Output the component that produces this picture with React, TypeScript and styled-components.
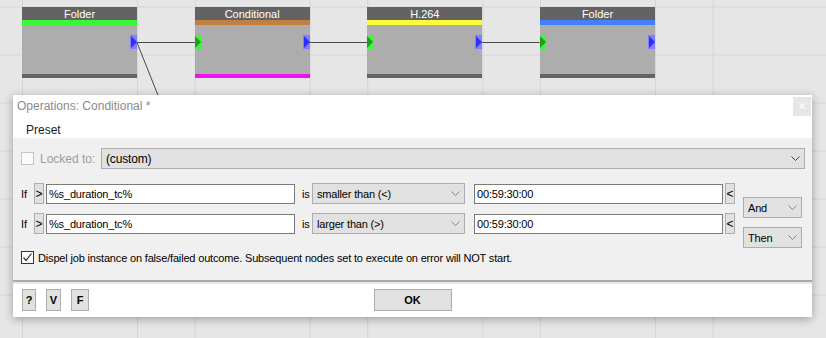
import styled, { createGlobalStyle } from "styled-components";

const GlobalStyle = createGlobalStyle`
  html, body {
    margin: 0;
    padding: 0;
  }
  body {
    font-family: "Liberation Sans", Arial, sans-serif;
    overflow: hidden;
  }
`;

type NodeInfo = {
  title: string;
  bar: string;
  bottom: string;
  input: boolean;
};

const nodes: NodeInfo[] = [
  { title: "Folder", bar: "#38f838", bottom: "#636363", input: false },
  { title: "Conditional", bar: "#c17f40", bottom: "#f012ee", input: true },
  { title: "H.264", bar: "#fcfc38", bottom: "#636363", input: true },
  { title: "Folder", bar: "#4181ff", bottom: "#636363", input: true },
];

const conditions = [
  { op: "smaller than (<)", join: "And" },
  { op: "larger than (>)", join: "Then" },
];

const Chevron = ({ color = "#5a5a5a" }: { color?: string }) => (
  <svg width="9" height="5" viewBox="0 0 9 5">
    <polyline points="0.5,0.5 4.5,4.5 8.5,0.5" fill="none" stroke={color} strokeWidth="1" />
  </svg>
);

const Check = () => (
  <svg width="11" height="11" viewBox="0 0 11 11">
    <polyline points="1.5,5.5 4,8.5 9.5,1.5" fill="none" stroke="#333" strokeWidth="1.2" />
  </svg>
);

const App = () => {
  return (
    <>
      <GlobalStyle />
      <Canvas>
        <NodeRow>
          {nodes.map((n, i) => (
            <NodeGroup key={i}>
              {i > 0 && (
                <Connector>
                  <svg width="100%" height="71" style={{ overflow: "visible" }}>
                    <line x1="0" y1="35.5" x2="100%" y2="35.5" stroke="#4a4a4a" strokeWidth="1" />
                    {i === 1 && (
                      <line x1="0" y1="35.5" x2="36" y2="126" stroke="#4a4a4a" strokeWidth="1" />
                    )}
                  </svg>
                </Connector>
              )}
              <Node>
                <NodeHeader>{n.title}</NodeHeader>
                <NodeBar $color={n.bar} />
                <NodeBody>
                  {n.input && (
                    <Port $bg="#3cf73c" $side="left">
                      <svg width="6" height="14" viewBox="0 0 6 14">
                        <polygon points="0,1 6,7 0,13" fill="#1f9f1f" />
                      </svg>
                    </Port>
                  )}
                  <Port $bg="#8080ff" $side="right">
                    <svg width="7" height="14" viewBox="0 0 7 14">
                      <polygon points="1,1 7,7 1,13" fill="#2f2ff5" />
                    </svg>
                  </Port>
                </NodeBody>
                <NodeBar $color={n.bottom} $height={4} />
              </Node>
            </NodeGroup>
          ))}
        </NodeRow>

        <Dialog>
          <TitleBar>
            <Title>Operations: Conditional *</Title>
            <CloseButton>×</CloseButton>
          </TitleBar>
          <MenuBar>Preset</MenuBar>
          <Panel>
            <LockedRow>
              <CheckBox $disabled />
              <LockLabel>Locked to:</LockLabel>
              <Select $grow>
                <span>(custom)</span>
                <Chevron color="#444" />
              </Select>
            </LockedRow>

            <Conditions>
              <ConditionList>
                {conditions.map((c, i) => (
                  <ConditionRow key={i}>
                    <IfLabel>If</IfLabel>
                    <TinyButton>&gt;</TinyButton>
                    <TextBox $left={2}>%s_duration_tc%</TextBox>
                    <IsLabel>is</IsLabel>
                    <Select $width={153}>
                      <span>{c.op}</span>
                      <Chevron color="#888" />
                    </Select>
                    <TextBox $left={9}>00:59:30:00</TextBox>
                    <TinyButton $left={2}>&lt;</TinyButton>
                  </ConditionRow>
                ))}
              </ConditionList>
              <JoinList>
                {conditions.map((c, i) => (
                  <Select key={i} $width={59}>
                    <span>{c.join}</span>
                    <Chevron color="#888" />
                  </Select>
                ))}
              </JoinList>
            </Conditions>

            <DispelRow>
              <CheckBox>
                <Check />
              </CheckBox>
              <DispelText>
                Dispel job instance on false/failed outcome. Subsequent nodes set to execute on
                error will NOT start.
              </DispelText>
            </DispelRow>
          </Panel>
          <Footer>
            <SmallButtons>
              <SmallButton $width={14}>?</SmallButton>
              <SmallButton $width={15}>V</SmallButton>
              <SmallButton $width={18}>F</SmallButton>
            </SmallButtons>
            <OkButton>OK</OkButton>
          </Footer>
        </Dialog>
      </Canvas>
    </>
  );
};

export default App;

const Canvas = styled.div`
  position: relative;
  width: 826px;
  height: 338px;
  overflow: hidden;
  background-color: #e6e6e6;
  background-image: linear-gradient(to right, #d5d5d5 1px, transparent 1px),
    linear-gradient(to right, #d5d5d5 1px, transparent 1px),
    linear-gradient(to bottom, #d5d5d5 1px, transparent 1px);
  background-size: 172.67px 100%, 172.67px 100%, 100% 48px;
  background-position: 22px 0, 137px 0, 0 6.5px;
`;

const NodeRow = styled.div`
  display: flex;
  padding: 7px 0 0 22px;
`;

const NodeGroup = styled.div`
  display: flex;
`;

const Connector = styled.div`
  width: 57.67px;
  height: 71px;
`;

const Node = styled.div`
  display: flex;
  flex-direction: column;
  width: 115px;
`;

const NodeHeader = styled.div`
  height: 13px;
  line-height: 14px;
  background: #636363;
  color: #ffffff;
  font-size: 11px;
  text-align: center;
`;

const NodeBar = styled.div<{ $color: string; $height?: number }>`
  height: ${(p) => p.$height ?? 5}px;
  background: ${(p) => p.$color};
`;

const NodeBody = styled.div`
  display: flex;
  align-items: flex-start;
  height: 49px;
  padding-top: 10px;
  box-sizing: border-box;
  background: #adadad;
`;

const Port = styled.div<{ $bg: string; $side: "left" | "right" }>`
  display: flex;
  width: ${(p) => (p.$side === "left" ? 6 : 7)}px;
  height: 14px;
  background: ${(p) => p.$bg};
  margin-left: ${(p) => (p.$side === "right" ? "auto" : "0")};
`;

const Dialog = styled.div`
  position: absolute;
  left: 13px;
  top: 95px;
  width: 799px;
  height: 222px;
  display: flex;
  flex-direction: column;
  background: #ffffff;
  box-shadow: 0 2px 9px rgba(0, 0, 0, 0.32);
`;

const TitleBar = styled.div`
  display: flex;
  justify-content: space-between;
  align-items: flex-start;
  height: 23px;
`;

const Title = styled.div`
  padding: 4px 0 0 4px;
  font-size: 12px;
  color: #8a8a8a;
`;

const CloseButton = styled.div`
  width: 18px;
  height: 19px;
  margin: 2px 1px 0 0;
  background: #e6e6e6;
  color: #ffffff;
  font-size: 14px;
  line-height: 18px;
  text-align: center;
`;

const MenuBar = styled.div`
  height: 20px;
  padding: 5px 0 0 13px;
  box-sizing: border-box;
  font-size: 12px;
  color: #222;
`;

const Panel = styled.div`
  display: flex;
  flex-direction: column;
  height: 142px;
  padding: 10px 7px 0 8px;
  box-sizing: border-box;
  background: #f0f0f0;
  font-size: 11px;
  letter-spacing: -0.17px;
  color: #000;
`;

const LockedRow = styled.div`
  display: flex;
  align-items: center;
  height: 21px;
`;

const CheckBox = styled.div<{ $disabled?: boolean }>`
  display: flex;
  align-items: center;
  justify-content: center;
  width: 13px;
  height: 13px;
  box-sizing: border-box;
  border: 1px solid ${(p) => (p.$disabled ? "#c6c6c6" : "#333333")};
  background: ${(p) => (p.$disabled ? "#fafafa" : "#ffffff")};
  flex-shrink: 0;
`;

const LockLabel = styled.div`
  width: 61px;
  margin-left: 6px;
  font-size: 12px;
  letter-spacing: 0;
  color: #9d9d9d;
`;

const Select = styled.div<{ $width?: number; $grow?: boolean }>`
  display: flex;
  align-items: center;
  justify-content: space-between;
  ${(p) => (p.$grow ? "flex: 1;" : `width: ${p.$width}px;`)}
  height: 21px;
  padding: 0 4px;
  box-sizing: border-box;
  background: #e1e1e1;
  border: 1px solid #adadad;
  font-size: ${(p) => (p.$grow ? 12 : 11)}px;
  white-space: nowrap;
`;

const Conditions = styled.div`
  display: flex;
  align-items: flex-start;
  margin-top: 14px;
`;

const ConditionList = styled.div`
  display: flex;
  flex-direction: column;
  gap: 9px;
`;

const ConditionRow = styled.div`
  display: flex;
  align-items: center;
  height: 21px;
`;

const IfLabel = styled.div`
  width: 13px;
`;

const TinyButton = styled.div<{ $left?: number }>`
  display: flex;
  align-items: center;
  justify-content: center;
  width: 10px;
  height: 21px;
  margin-left: ${(p) => p.$left ?? 0}px;
  box-sizing: border-box;
  background: #e1e1e1;
  border: 1px solid #adadad;
  font-size: 12px;
`;

const TextBox = styled.div<{ $left: number }>`
  display: flex;
  align-items: center;
  width: 249px;
  height: 20px;
  margin-left: ${(p) => p.$left}px;
  padding-left: 2px;
  box-sizing: border-box;
  background: #ffffff;
  border: 1px solid #7a7a7a;
`;

const IsLabel = styled.div`
  width: 17px;
  padding-left: 7px;
  box-sizing: border-box;
`;

const JoinList = styled.div`
  display: flex;
  flex-direction: column;
  gap: 9px;
  margin-left: 8px;
  padding-top: 14px;
`;

const DispelRow = styled.div`
  display: flex;
  align-items: center;
  margin-top: 3px;
  height: 13px;
`;

const DispelText = styled.div`
  margin-left: 4px;
  white-space: nowrap;
`;

const Footer = styled.div`
  display: grid;
  grid-template-columns: 1fr auto 1fr;
  align-items: start;
  flex: 1;
  padding: 7px 0 0 9px;
  border-top: 2px solid #a9a9a9;
  box-shadow: inset 0 2px 0 #e9e9e9;
`;

const SmallButtons = styled.div`
  display: flex;
  gap: 10px;
`;

const SmallButton = styled.div<{ $width: number }>`
  display: flex;
  align-items: center;
  justify-content: center;
  width: ${(p) => p.$width}px;
  height: 22px;
  box-sizing: border-box;
  background: #e1e1e1;
  border: 1px solid #adadad;
  font-size: 11px;
  font-weight: bold;
`;

const OkButton = styled.div`
  display: flex;
  align-items: center;
  justify-content: center;
  width: 78px;
  height: 22px;
  box-sizing: border-box;
  background: #e1e1e1;
  border: 1px solid #adadad;
  font-size: 11px;
  font-weight: bold;
  margin-left: -9px;
`;
